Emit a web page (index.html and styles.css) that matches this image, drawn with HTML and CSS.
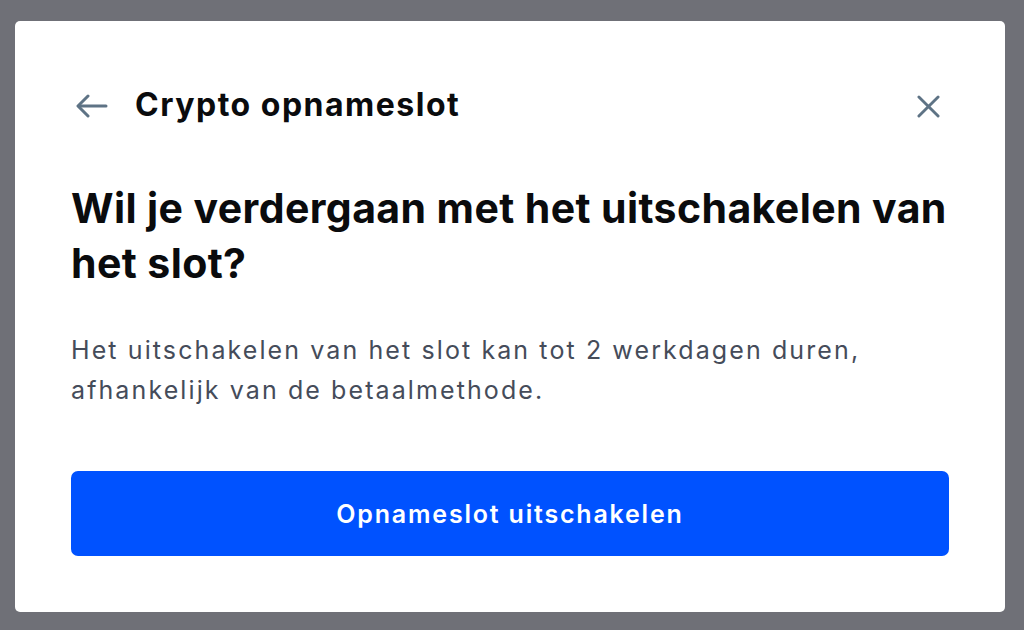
FILE: index.html
```html
<!DOCTYPE html>
<html lang="nl">
<head>
<meta charset="utf-8">
<link rel="stylesheet" href="styles.css">
</head>
<body>
<div class="overlay">
  <div class="modal">
    <div class="modal-header">
      <button class="icon-btn back" aria-label="Terug">
        <svg width="32" height="24" viewBox="0 0 32 24" fill="none" stroke="currentColor" stroke-width="3" stroke-linecap="round" stroke-linejoin="round">
          <path d="M30 12H3"/>
          <path d="M12 2L2 12l10 10"/>
        </svg>
      </button>
      <h2 class="modal-title">Crypto opnameslot</h2>
      <button class="icon-btn close" aria-label="Sluiten">
        <svg width="24" height="24" viewBox="0 0 24 24" fill="none" stroke="currentColor" stroke-width="3" stroke-linecap="round">
          <path d="M2 2l20 20"/>
          <path d="M22 2L2 22"/>
        </svg>
      </button>
    </div>
    <h1 class="headline">Wil je verdergaan met het uitschakelen van het slot?</h1>
    <p class="body-text">Het uitschakelen van het slot kan tot 2 werkdagen duren, afhankelijk van de betaalmethode.</p>
    <button class="primary-btn">Opnameslot uitschakelen</button>
  </div>
</div>
</body>
</html>
```

FILE: styles.css
```css
* { box-sizing: border-box; }
html, body {
  margin: 0;
  padding: 0;
  width: 1024px;
  height: 630px;
  overflow: hidden;
}
body {
  background: #6f7077;
  font-family: Inter, "Noto Sans", sans-serif;
}
.overlay {
  padding: 21px 19px 18px 15px;
  height: 630px;
}
.modal {
  background: #ffffff;
  border-radius: 5px;
  width: 990px;
  height: 591px;
  padding: 64px 56px 56px 56px;
  display: flex;
  flex-direction: column;
}
.modal-header {
  display: flex;
  align-items: center;
  height: 40px;
}
.icon-btn {
  background: none;
  border: none;
  padding: 0;
  color: #5e7385;
  display: flex;
  align-items: center;
  justify-content: center;
  cursor: pointer;
}
.back {
  width: 34px;
  height: 40px;
  margin-left: 4px;
  margin-right: 26px;
  padding-top: 2px;
}
.close {
  margin-left: auto;
  width: 24px;
  height: 40px;
  margin-right: 9px;
  padding-top: 2px;
}
.close svg { width: 23px; height: 23px; }
.modal-title {
  margin: 0;
  font-size: 32px;
  line-height: 40px;
  font-weight: 700;
  color: #0a0b0d;
  letter-spacing: 1.5px;
}
.headline {
  margin: 56px 0 0 0;
  font-size: 41px;
  line-height: 55px;
  font-weight: 700;
  color: #0a0b0d;
  letter-spacing: 0.4px;
}
.body-text {
  margin: 39px 0 0 0;
  font-size: 25px;
  line-height: 40px;
  font-weight: 400;
  color: #454c5a;
  letter-spacing: 2.1px;
}
.primary-btn {
  margin-top: 61px;
  height: 85px;
  width: 100%;
  border: none;
  border-radius: 7px;
  background: #0052ff;
  color: #ffffff;
  font-family: Inter, "Noto Sans", sans-serif;
  font-size: 25px;
  font-weight: 600;
  letter-spacing: 1.8px;
  cursor: pointer;
}
```
